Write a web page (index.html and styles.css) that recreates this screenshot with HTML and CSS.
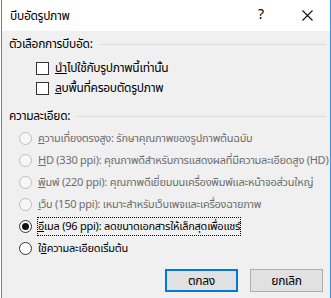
FILE: index.html
```html
<!DOCTYPE html>
<html lang="th">
<head>
    <meta charset="UTF-8">
    <title>บีบอัดรูปภาพ</title>
    <link rel="stylesheet" href="styles.css">
</head>
<body>
    <div class="dialog">
        <div class="titlebar">
            <span class="title">บีบอัดรูปภาพ</span>
            <span class="tb-btn help">?</span>
            <span class="tb-btn close">
                <svg width="11" height="11" viewBox="0 0 11 11"><path d="M0.5 0.5 L10.5 10.5 M10.5 0.5 L0.5 10.5" stroke="#111" stroke-width="1.1" fill="none"/></svg>
            </span>
        </div>

        <div class="content">
            <div class="group-head"><span>ตัวเลือกการบีบอัด:</span><i class="rule"></i></div>
            <label class="check"><span class="box"></span><span><u>น</u>ำไปใช้กับรูปภาพนี้เท่านั้น</span></label>
            <label class="check"><span class="box"></span><span><u>ล</u>บพื้นที่ครอบตัดรูปภาพ</span></label>

            <div class="group-head second"><span>ความละเอียด:</span><i class="rule"></i></div>
            <div class="radios">
                <label class="radio disabled"><span class="dot"></span><span><u>ค</u>วามเที่ยงตรงสูง: รักษาคุณภาพของรูปภาพต้นฉบับ</span></label>
                <label class="radio disabled"><span class="dot"></span><span><u>H</u>D (330 ppi): คุณภาพดีสำหรับการแสดงผลที่มีความละเอียดสูง (HD)</span></label>
                <label class="radio disabled"><span class="dot"></span><span><u>พ</u>ิมพ์ (220 ppi): คุณภาพดีเยี่ยมบนเครื่องพิมพ์และหน้าจอส่วนใหญ่</span></label>
                <label class="radio disabled"><span class="dot"></span><span><u>เ</u>ว็บ (150 ppi): เหมาะสำหรับเว็บเพจและเครื่องฉายภาพ</span></label>
                <label class="radio checked"><span class="dot"></span><span class="focus"><u>อ</u>ีเมล (96 ppi): ลดขนาดเอกสารให้เล็กสุดเพื่อแชร์</span></label>
                <label class="radio"><span class="dot"></span><span>ใ<u>ช</u>้ความละเอียดเริ่มต้น</span></label>
            </div>

            <div class="buttons">
                <button class="btn default">ตกลง</button>
                <button class="btn">ยกเลิก</button>
            </div>
        </div>
    </div>
</body>
</html>
```

FILE: styles.css
```css
body {
    margin: 0;
    font-family: "Leelawadee UI", Tahoma, "Noto Sans Thai", "Noto Sans", sans-serif;
    font-size: 12px;
    color: #000;
}
.dialog {
    width: 330px;
    height: 298px;
    box-sizing: border-box;
    margin-left: 1px;
    background: #f0f0f0;
    border-left: 1px solid #3c8ddd;
    border-right: 1px solid #3c8ddd;
    overflow: hidden;
}
.titlebar {
    height: 31px;
    background: #fff;
    display: flex;
    align-items: center;
    padding-left: 8px;
}
.title {
    flex: 1;
    letter-spacing: -0.3px;
}
.tb-btn {
    width: 46px;
    height: 31px;
    display: flex;
    align-items: center;
    justify-content: center;
}
.help {
    font-size: 14px;
    margin-top: -2px;
}
.close svg {
    display: block;
}
.content {
    padding: 5px 4px 0 7px;
    white-space: nowrap;
    letter-spacing: -0.3px;
}
.group-head {
    display: flex;
    align-items: center;
    height: 16px;
}
.group-head.second {
    margin-top: 10px;
}
.rule {
    flex: 1;
    height: 1px;
    background: #dcdcdc;
    margin-left: 6px;
}
.check {
    display: flex;
    align-items: center;
    height: 20px;
    padding-left: 27px;
}
.group-head + .check {
    margin-top: 6px;
}
.box {
    width: 11px;
    height: 11px;
    border: 1px solid #333;
    background: #fff;
    margin-right: 6px;
}
.radios {
    margin-top: 3px;
    font-size: 11px;
    letter-spacing: -0.25px;
}
.radio {
    display: flex;
    align-items: center;
    height: 22px;
    padding-left: 10px;
}
.dot {
    flex: none;
    width: 11px;
    height: 11px;
    border: 1px solid #333;
    border-radius: 50%;
    background: #fff;
    margin-right: 6px;
    display: flex;
    align-items: center;
    justify-content: center;
}
.radio.disabled {
    color: #6d6d6d;
}
.radio.disabled .dot {
    border-color: #bcbcbc;
    background: #f7f7f7;
}
.radio.checked .dot::after {
    content: "";
    width: 7px;
    height: 7px;
    border-radius: 50%;
    background: #111;
}
.focus {
    outline: 1px dotted #000;
}
.buttons {
    display: flex;
    justify-content: flex-end;
    gap: 12px;
    margin-top: 10px;
    padding-right: 3px;
}
.btn {
    width: 73px;
    height: 23px;
    font-family: inherit;
    font-size: 12px;
    letter-spacing: -0.3px;
    background: #e1e1e1;
    border: 1px solid #adadad;
    padding: 0;
}
.btn.default {
    border: 2px solid #0078d7;
}
```
